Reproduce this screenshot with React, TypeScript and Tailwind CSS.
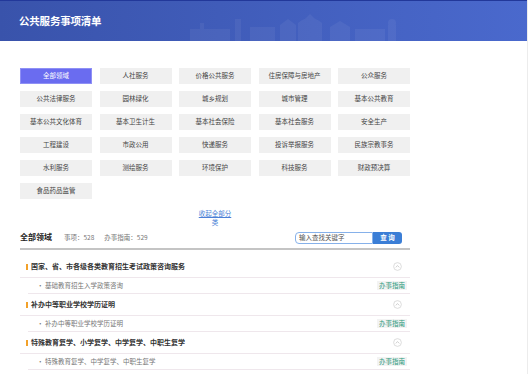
import React from 'react';

const areas = [
    '全部领域', '人社服务', '价格公共服务', '住房保障与房地产', '公众服务',
    '公共法律服务', '园林绿化', '城乡规划', '城市管理', '基本公共教育',
    '基本公共文化体育', '基本卫生计生', '基本社会保险', '基本社会服务', '安全生产',
    '工程建设', '市政公用', '快递服务', '投诉举报服务', '民族宗教事务',
    '水利服务', '测绘服务', '环境保护', '科技服务', '财政预决算',
    '食品药品监管',
];

const items = [
    { title: '国家、省、市各级各类教育招生考试政策咨询服务', sub: '基础教育招生入学政策咨询' },
    { title: '补办中等职业学校学历证明', sub: '补办中等职业学校学历证明' },
    { title: '特殊教育复学、小学复学、中学复学、中职生复学', sub: '特殊教育复学、中学复学、中职生复学' },
];

function Skyline() {
    return (
        <svg className="absolute left-[180px] bottom-0" width="240" height="30" viewBox="0 0 240 30">
            <g fill="#ffffff" opacity="0.05">
                <rect x="10" y="18" width="40" height="12" />
                <rect x="20" y="12" width="4" height="18" />
                <rect x="55" y="8" width="6" height="22" />
                <path d="M70 30 L70 16 L95 16 L95 30 Z" />
                <path d="M100 30 L100 14 L108 8 L116 14 L116 30 Z" />
                <path d="M118 30 L118 12 Q130 2 142 12 L142 30 Z" />
                <path d="M125 8 L130 3 L135 8 Z" />
                <path d="M150 30 L150 16 L160 10 L170 16 L170 30 Z" />
                <rect x="175" y="18" width="30" height="12" />
                <rect x="208" y="14" width="8" height="16" />
                <circle cx="212" cy="12" r="4" />
            </g>
        </svg>
    );
}

function UpCircle() {
    return (
        <svg width="9" height="9" viewBox="0 0 10 10">
            <circle cx="5" cy="5" r="4.3" fill="none" stroke="#cfcfcf" strokeWidth="0.8" />
            <path d="M3 6 L5 4 L7 6" fill="none" stroke="#bdbdbd" strokeWidth="0.8" />
        </svg>
    );
}

export default function App() {
    return (
        <div className="w-[528px] h-[374px] bg-white overflow-hidden border-r border-[#ececec]" style={{ fontFamily: '"Noto Sans CJK SC", "Noto Sans", sans-serif' }}>
            {/* HEADER */}
            <div className="relative h-[41px] border-t border-[#22389a] bg-gradient-to-r from-[#3953ab] to-[#4a69cd] flex items-center pl-[19px] overflow-hidden">
                <Skyline />
                <h1 className="relative text-[10.5px] font-bold text-white tracking-[-0.2px]">公共服务事项清单</h1>
            </div>

            <div className="pl-[20px] w-[410px]">
                {/* AREA GRID */}
                <div className="mt-[27px] grid grid-cols-5 gap-x-[7.5px] gap-y-[7px] w-[390px]">
                    {areas.map((a, i) => (
                        <div
                            key={a}
                            className={`h-[16px] flex items-center justify-center text-[6.5px] ${i === 0 ? 'bg-[#6a6cf0] text-white border border-[#8f90f5]' : 'bg-[#f0f0f0] text-[#444]'}`}
                        >
                            {a}
                        </div>
                    ))}
                </div>

                {/* COLLAPSE LINK */}
                <div className="mt-[10px] flex justify-center">
                    <div className="w-[36px] text-center text-[6.5px] leading-[9px] text-[#4b7fd6]">
                        <div className="underline whitespace-nowrap">收起全部分</div>
                        <div>类</div>
                    </div>
                </div>

                {/* SUMMARY + SEARCH */}
                <div className="mt-[4px] flex items-end justify-between border-b-2 border-[#c4c4c4] pb-[4px]">
                    <div className="flex items-baseline text-[6.5px] text-[#777] pb-[1px]">
                        <span className="text-[8px] font-bold text-[#222] mr-[12px]">全部领域</span>
                        <span className="mr-[10px]">事项：528</span>
                        <span>办事指南：529</span>
                    </div>
                    <div className="flex h-[12px] mr-[8px]">
                        <div className="w-[78px] border border-[#86b1ea] rounded-l-[4px] flex items-center pl-[3px] text-[6.5px] text-[#555]">输入查找关键字</div>
                        <div className="w-[29px] bg-[#3b7ed6] rounded-r-[3px] flex items-center justify-center text-[6.5px] font-bold text-white">查 询</div>
                    </div>
                </div>

                {/* LIST */}
                <div className="mt-[6px]">
                    {items.map(it => (
                        <div key={it.title}>
                            <div className="h-[22px] flex items-center justify-between border-b border-[#efe7ec]">
                                <div className="flex items-center">
                                    <span className="ml-[6px] mr-[3px] w-[2px] h-[6px] bg-[#f2a12a]" />
                                    <span className="text-[7px] font-bold text-[#333]">{it.title}</span>
                                </div>
                                <div className="mr-[8px] flex">
                                    <UpCircle />
                                </div>
                            </div>
                            <div className="ml-[8px] h-[16px] flex items-center justify-between border-b border-[#efe7ec]">
                                <span className="ml-[9px] text-[6.5px] text-[#777]">· {it.sub}</span>
                                <span className="mr-[3px] px-[2px] h-[9px] flex items-center bg-[#f3f3f3] text-[6.5px] text-[#2b9a7e]">办事指南</span>
                            </div>
                        </div>
                    ))}
                </div>
            </div>
        </div>
    );
}
